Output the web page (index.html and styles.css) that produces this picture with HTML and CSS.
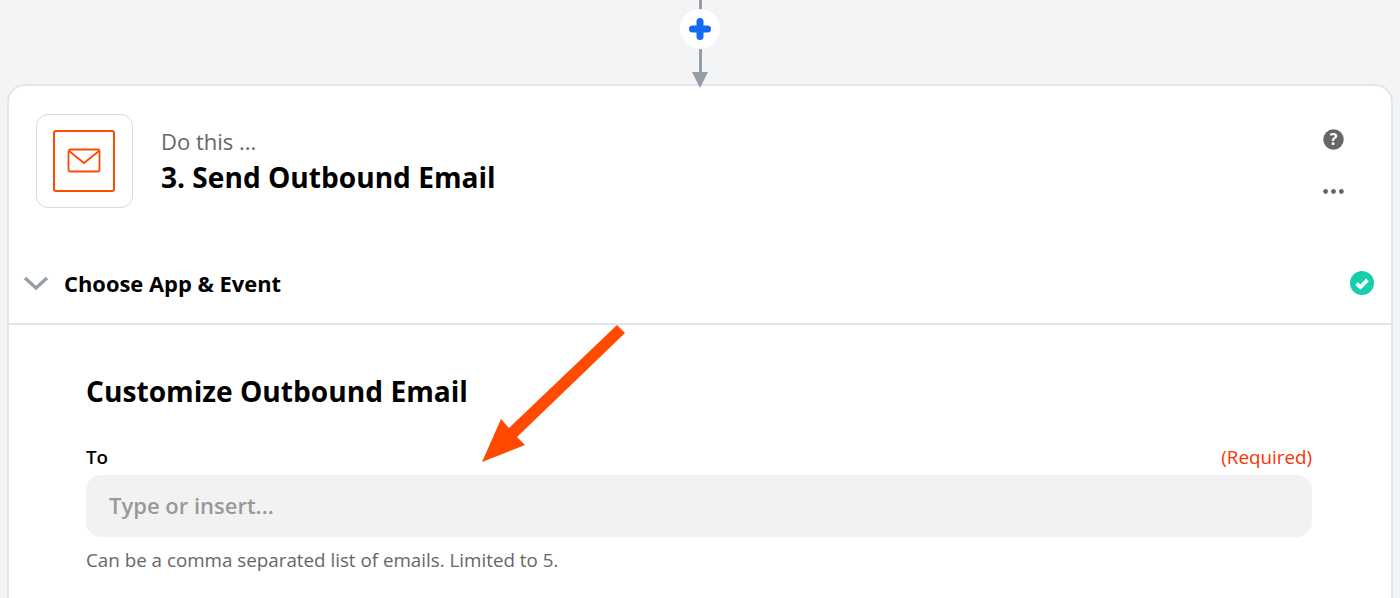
FILE: index.html
```html
<!DOCTYPE html>
<html lang="en">
<head>
    <meta charset="UTF-8">
    <title>Send Outbound Email</title>
    <link rel="stylesheet" href="styles.css">
</head>
<body>

    <div class="connector">
        <div class="line"></div>
        <div class="add-btn">
            <svg width="24" height="24" viewBox="0 0 24 24"><path d="M12 4.5v15M4.5 12h15" stroke="#136bf5" stroke-width="7" stroke-linecap="round" fill="none"/></svg>
        </div>
        <div class="arrow-head"></div>
    </div>

    <div class="card">
        <div class="step-head">
            <div class="app-icon">
                <div class="app-icon-inner">
                    <svg width="34" height="26" viewBox="0 0 34 26"><rect x="1.5" y="1.5" width="31" height="22" rx="2" fill="none" stroke="#ff4a00" stroke-width="1.8"/><path d="M2 3l15 12L32 3" fill="none" stroke="#ff4a00" stroke-width="1.8"/></svg>
                </div>
            </div>
            <div class="step-text">
                <div class="step-label">Do this ...</div>
                <div class="step-title">3. Send Outbound Email</div>
            </div>
            <div class="step-actions">
                <svg width="21" height="21" viewBox="0 0 21 21"><circle cx="10.5" cy="10.5" r="10.2" fill="#666"/><text x="10.5" y="16" text-anchor="middle" class="help-mark">?</text></svg>
                <svg width="21" height="5" viewBox="0 0 21 5"><circle cx="2.6" cy="2.5" r="2.4" fill="#666"/><circle cx="10.5" cy="2.5" r="2.4" fill="#666"/><circle cx="18.4" cy="2.5" r="2.4" fill="#666"/></svg>
            </div>
        </div>

        <div class="section-row">
            <svg width="26" height="15" viewBox="0 0 26 15"><path d="M2 2l11 10L24 2" fill="none" stroke="#969ea5" stroke-width="3.4"/></svg>
            <div class="section-title">Choose App &amp; Event</div>
            <svg class="done" width="24" height="24" viewBox="0 0 24 24"><circle cx="12" cy="12" r="12" fill="#13d0ab"/><path d="M6.5 12.5l4 3.6 7-7.2" fill="none" stroke="#fff" stroke-width="3.8"/></svg>
        </div>

        <div class="form">
            <h2>Customize Outbound Email</h2>
            <div class="field-head">
                <span class="field-label">To</span>
                <span class="required">(Required)</span>
            </div>
            <div class="input">Type or insert...</div>
            <p class="hint">Can be a comma separated list of emails. Limited to 5.</p>
        </div>
    </div>

    <!-- annotation drawn over the screenshot -->
    <svg class="callout" width="1400" height="598" viewBox="0 0 1400 598"><polygon points="617,325 625,333 517,437 525,445 482,462 501,419 509,428" fill="#ff4a00"/></svg>

</body>
</html>
```

FILE: styles.css
```css
html, body {
    height: 598px;
    overflow: hidden;
}
body {
    margin: 0;
    position: relative;
    background-color: #f3f4f6;
    font-family: "Open Sans", sans-serif;
    color: #000;
}
.connector {
    height: 84px;
    display: flex;
    flex-direction: column;
    align-items: center;
    position: relative;
    z-index: 1;
}
.line {
    flex: none;
    width: 3px;
    height: 72px;
    background: #969ea5;
}
.add-btn {
    position: absolute;
    top: 9px;
    left: 680px;
    width: 40px;
    height: 40px;
    border-radius: 50%;
    background: #fff;
    display: flex;
    align-items: center;
    justify-content: center;
}
.arrow-head {
    flex: none;
    width: 0;
    height: 0;
    border-left: 8px solid transparent;
    border-right: 8px solid transparent;
    border-top: 16px solid #969ea5;
}
.card {
    margin: 0 7px 0 6.5px;
    height: 514px;
    box-sizing: border-box;
    background: #fff;
    border: 2px solid #e2e5e9;
    border-bottom: none;
    border-radius: 18px 18px 0 0;
}
.step-head {
    display: flex;
    align-items: flex-start;
    padding: 28px 47px 0 27.5px;
    height: 147px;
    box-sizing: border-box;
}
.app-icon {
    width: 97px;
    height: 94px;
    box-sizing: border-box;
    padding-right: 1px;
    border: 1.5px solid #d9d9d9;
    border-radius: 12px;
    display: flex;
    align-items: center;
    justify-content: center;
}
.app-icon-inner {
    width: 62px;
    height: 62px;
    box-sizing: border-box;
    border: 2px solid #ff4a00;
    border-radius: 3px;
    display: flex;
    align-items: center;
    justify-content: center;
}
.step-text {
    flex: 1;
    margin-left: 28px;
    padding-top: 12px;
}
.step-label {
    font-size: 22px;
    line-height: 30px;
    color: #666;
}
.step-title {
    margin-top: 1px;
    font-size: 28.1px;
    line-height: 40px;
    font-weight: 700;
}
.step-actions {
    display: flex;
    flex-direction: column;
    align-items: center;
    gap: 39px;
    padding-top: 15px;
}
.help-mark {
    font-family: "Open Sans", sans-serif;
    font-size: 16px;
    font-weight: 700;
    fill: #fff;
}
.section-row {
    display: flex;
    align-items: center;
    height: 92px;
    padding: 26px 17px 16px 14.5px;
    box-sizing: border-box;
    border-bottom: 2px solid #e2e5e9;
}
.section-title {
    flex: 1;
    margin-left: 15px;
    font-size: 21.9px;
    font-weight: 700;
}
.form {
    padding: 0 79px 0 77.5px;
}
h2 {
    margin: 0;
    padding-top: 46px;
    font-size: 28.15px;
    line-height: 40px;
    font-weight: 700;
}
.field-head {
    display: flex;
    justify-content: space-between;
    margin-top: 33px;
    font-size: 18.8px;
    line-height: 26px;
}
.field-label {
    font-weight: 600;
}
.required {
    color: #fa3208;
}
.input {
    margin-top: 5px;
    height: 62px;
    padding: 0 0 2px 23px;
    box-sizing: border-box;
    display: flex;
    align-items: center;
    background: #f2f2f2;
    border-radius: 15px;
    font-size: 22px;
    font-weight: 600;
    color: #999;
}
.hint {
    margin: 10px 0 0;
    font-size: 18.8px;
    line-height: 26px;
    color: #666;
}
.callout {
    position: absolute;
    top: 0;
    left: 0;
    z-index: 2;
}
```
